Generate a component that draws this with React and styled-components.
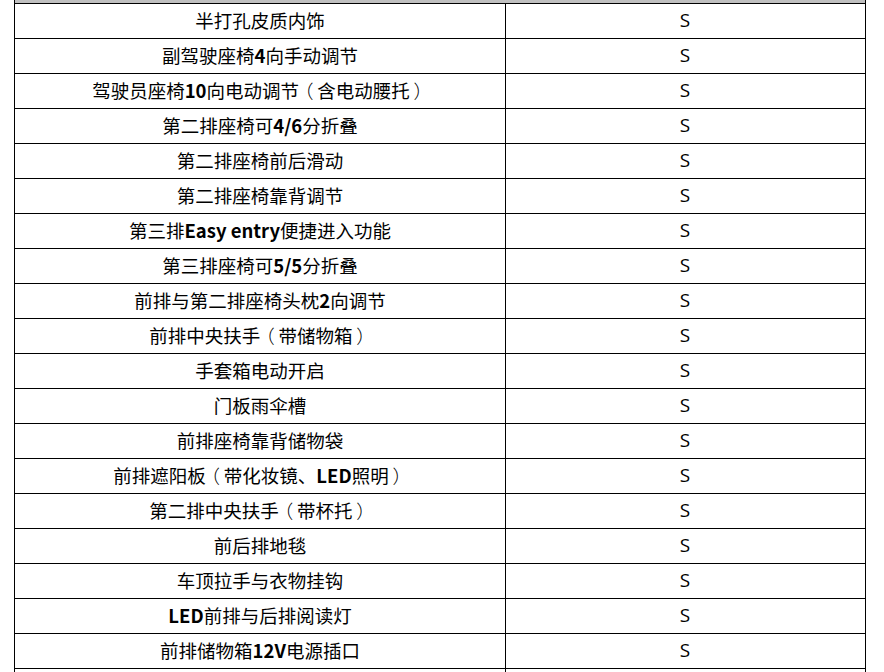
import React from 'react';
import styled, { createGlobalStyle } from 'styled-components';

const GlobalStyle = createGlobalStyle`
	html, body {
		margin: 0;
		padding: 0;
		background: #fff;
	}

	body {
		font-family: "Noto Sans CJK SC", "Noto Sans", sans-serif;
		color: #000;
		overflow: hidden;
	}
`;

const Sheet = styled.div`
	margin-left: 14px;
	width: 852px;
	border-left: 1px solid #000;
	border-right: 1px solid #000;
	box-sizing: border-box;
`;

const HeaderBand = styled.div`
	height: 3px;
	background: #c0c0c0;
	border-bottom: 1px solid #000;
`;

const Row = styled.div`
	display: grid;
	grid-template-columns: 491px 358px;
	height: 35px;
	box-sizing: border-box;
	border-bottom: 1px solid #000;
`;

const Cell = styled.div`
	display: flex;
	align-items: center;
	justify-content: center;
	font-size: 18.5px;
	line-height: 1;
	white-space: nowrap;
	padding-bottom: 2px;
	border-right: ${props => (props.$divider ? '1px solid #000' : 'none')};
`;

const Latin = styled.span`
	font-weight: 600;
`;

// the sheet's font draws full-width brackets centred in their box
const Bracket = styled.span`
	font-weight: 300;
	font-feature-settings: "palt";
	padding: 0 0.24em;
`;

const Mark = styled.span`
	font-family: "Open Sans", "Noto Sans", sans-serif;
	font-size: 19px;
`;

const items = [
	'半打孔皮质内饰',
	'副驾驶座椅4向手动调节',
	'驾驶员座椅10向电动调节（含电动腰托）',
	'第二排座椅可4/6分折叠',
	'第二排座椅前后滑动',
	'第二排座椅靠背调节',
	'第三排Easy entry便捷进入功能',
	'第三排座椅可5/5分折叠',
	'前排与第二排座椅头枕2向调节',
	'前排中央扶手（带储物箱）',
	'手套箱电动开启',
	'门板雨伞槽',
	'前排座椅靠背储物袋',
	'前排遮阳板（带化妆镜、LED照明）',
	'第二排中央扶手（带杯托）',
	'前后排地毯',
	'车顶拉手与衣物挂钩',
	'LED前排与后排阅读灯',
	'前排储物箱12V电源插口',
	'',
];

// latin letters and digits come out heavier than the CJK text in the sheet
function renderLabel(text) {
	return text.split(/([A-Za-z0-9/]+(?: [A-Za-z0-9/]+)*|[（）])/).map((part, i) => {
		if (part === '（' || part === '）') {
			return <Bracket key={i}>{part}</Bracket>;
		}
		return /[A-Za-z0-9]/.test(part) ? <Latin key={i}>{part}</Latin> : part;
	});
}

export default function App() {
	return (
		<>
			<GlobalStyle />
			<Sheet>
				<HeaderBand />
				{items.map((label, i) => (
					<Row key={i}>
						<Cell $divider>{renderLabel(label)}</Cell>
						<Cell>{label ? <Mark>S</Mark> : ''}</Cell>
					</Row>
				))}
			</Sheet>
		</>
	);
}
